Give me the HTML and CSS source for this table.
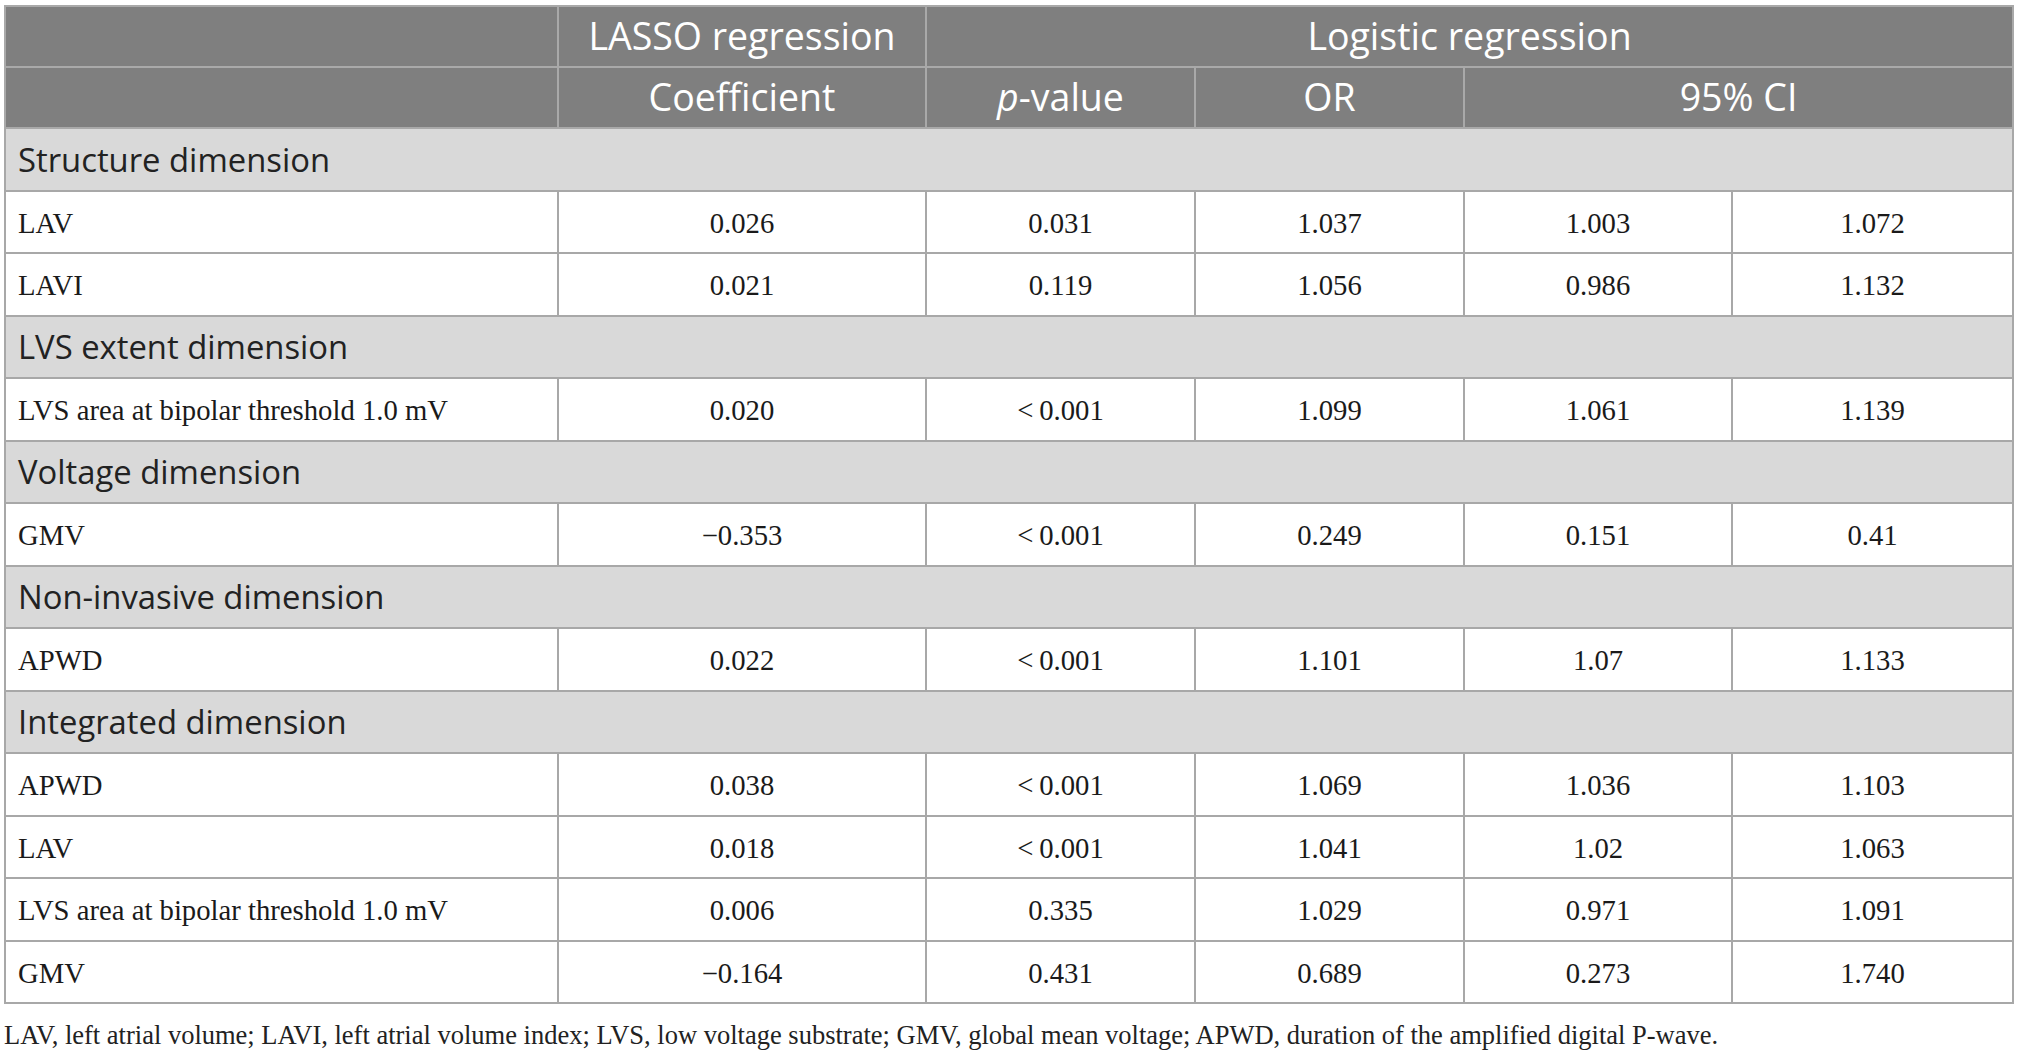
FILE: index.html
```html
<!DOCTYPE html>
<html lang="en">
<head>
<meta charset="utf-8">
<title>Table</title>
<link rel="stylesheet" href="styles.css">
</head>
<body>
<div class="wrap">
<table class="data">
  <colgroup>
    <col class="c-label">
    <col class="c-coef">
    <col class="c-p">
    <col class="c-or">
    <col class="c-lo">
    <col class="c-hi">
  </colgroup>
  <thead>
    <tr class="head">
      <th></th>
      <th>LASSO regression</th>
      <th colspan="4">Logistic regression</th>
    </tr>
    <tr class="head">
      <th></th>
      <th>Coefficient</th>
      <th><i>p</i>-value</th>
      <th>OR</th>
      <th colspan="2">95% CI</th>
    </tr>
  </thead>
  <tbody>
    <tr class="sec"><td colspan="6">Structure dimension</td></tr>
    <tr><td>LAV</td><td>0.026</td><td>0.031</td><td>1.037</td><td>1.003</td><td>1.072</td></tr>
    <tr><td>LAVI</td><td>0.021</td><td>0.119</td><td>1.056</td><td>0.986</td><td>1.132</td></tr>
    <tr class="sec"><td colspan="6">LVS extent dimension</td></tr>
    <tr><td>LVS area at bipolar threshold 1.0 mV</td><td>0.020</td><td>&lt;&#8201;0.001</td><td>1.099</td><td>1.061</td><td>1.139</td></tr>
    <tr class="sec"><td colspan="6">Voltage dimension</td></tr>
    <tr><td>GMV</td><td>&minus;0.353</td><td>&lt;&#8201;0.001</td><td>0.249</td><td>0.151</td><td>0.41</td></tr>
    <tr class="sec"><td colspan="6">Non-invasive dimension</td></tr>
    <tr><td>APWD</td><td>0.022</td><td>&lt;&#8201;0.001</td><td>1.101</td><td>1.07</td><td>1.133</td></tr>
    <tr class="sec"><td colspan="6">Integrated dimension</td></tr>
    <tr><td>APWD</td><td>0.038</td><td>&lt;&#8201;0.001</td><td>1.069</td><td>1.036</td><td>1.103</td></tr>
    <tr><td>LAV</td><td>0.018</td><td>&lt;&#8201;0.001</td><td>1.041</td><td>1.02</td><td>1.063</td></tr>
    <tr><td>LVS area at bipolar threshold 1.0 mV</td><td>0.006</td><td>0.335</td><td>1.029</td><td>0.971</td><td>1.091</td></tr>
    <tr><td>GMV</td><td>&minus;0.164</td><td>0.431</td><td>0.689</td><td>0.273</td><td>1.740</td></tr>
  </tbody>
</table>
<p class="note">LAV, left atrial volume; LAVI, left atrial volume index; LVS, low voltage substrate; GMV, global mean voltage; APWD, duration of the amplified digital P-wave.</p>
</div>
</body>
</html>
```
FILE: styles.css
```css
html, body {
  margin: 0;
  padding: 0;
  background: #ffffff;
}

.wrap {
  padding: 5px 0 0 4px;
}

.data {
  border-collapse: collapse;
  width: 2008px;
  table-layout: fixed;
  font-family: "Liberation Serif", "Times New Roman", serif;
  font-size: 28.7px;
  color: #1a1a1a;
}

.c-label { width: 553px; }
.c-coef { width: 368px; }
.c-p { width: 269px; }
.c-or { width: 269px; }
.c-lo { width: 268px; }
.c-hi { width: 281px; }

.data th,
.data td {
  border: 2px solid #a8a8a8;
  height: 60.5px;
  padding: 3px 0 0 0;
  box-sizing: border-box;
  text-align: center;
  vertical-align: middle;
}

.data td {
  height: 62.5px;
}

.data td:first-child {
  text-align: left;
  padding-left: 12px;
}

.head th {
  height: 61px;
  padding: 0 0 3px 0;
  background: #7f7f7f;
  color: #ffffff;
  font-family: "Open Sans", "Noto Sans", sans-serif;
  font-weight: 400;
  font-size: 37.5px;
  border-color: #a9a9a9;
}

.sec td {
  padding-top: 0;
  background: #d9d9d9;
  font-family: "Open Sans", "Noto Sans", sans-serif;
  font-size: 32.8px;
  color: #222222;
  padding-left: 10px;
}

.note {
  margin: 16px 0 0 0;
  font-family: "Liberation Serif", "Times New Roman", serif;
  font-size: 26.5px;
  color: #222222;
}
```
